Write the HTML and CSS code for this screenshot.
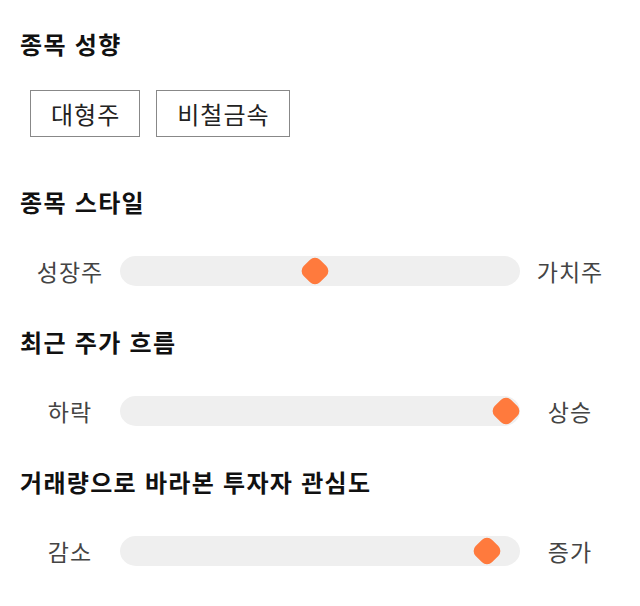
FILE: index.html
```html
<!DOCTYPE html>
<html lang="ko">
<head>
<meta charset="utf-8">
<link rel="stylesheet" href="styles.css">
</head>
<body>
<main class="page">
  <h2 class="title">종목 성향</h2>
  <div class="chips">
    <span class="chip">대형주</span>
    <span class="chip">비철금속</span>
  </div>

  <h2 class="title gap-lg">종목 스타일</h2>
  <div class="scale">
    <span class="label">성장주</span>
    <div class="track"><span class="thumb" style="--v:0.486"></span></div>
    <span class="label">가치주</span>
  </div>

  <h2 class="title">최근 주가 흐름</h2>
  <div class="scale">
    <span class="label">하락</span>
    <div class="track"><span class="thumb" style="--v:1"></span></div>
    <span class="label">상승</span>
  </div>

  <h2 class="title">거래량으로 바라본 투자자 관심도</h2>
  <div class="scale">
    <span class="label">감소</span>
    <div class="track"><span class="thumb" style="--v:0.949"></span></div>
    <span class="label">증가</span>
  </div>
</main>
</body>
</html>
```

FILE: styles.css
```css
html, body {
  margin: 0;
  padding: 0;
  background: #ffffff;
}

.page {
  padding: 29px 20px 0 20px;
  font-family: "Noto Sans CJK KR", "Noto Sans", sans-serif;
  color: #111;
}

.title {
  margin: 41px 0 0 0;
  font-size: 24px;
  font-weight: 700;
  letter-spacing: 1.3px;
  line-height: 30px;
  height: 30px;
  color: #111;
}

.title:first-child {
  margin-top: 0;
}

.title.gap-lg {
  margin-top: 50px;
}

.chips {
  display: flex;
  gap: 16px;
  margin-top: 31px;
  padding-left: 10px;
}

.chip {
  display: block;
  border: 1px solid #888;
  padding: 0 19px 0 20px;
  font-size: 24px;
  letter-spacing: 1px;
  line-height: 45px;
  height: 45px;
  color: #222;
}

.scale {
  display: grid;
  grid-template-columns: 100px 1fr 100px;
  align-items: center;
  margin-top: 39px;
  height: 30px;
}

.label {
  text-align: center;
  font-size: 23px;
  letter-spacing: 1px;
  line-height: 30px;
  color: #444;
}

.track {
  position: relative;
  height: 30px;
  background: #efefef;
  border-radius: 16px / 15px;
}

.thumb {
  position: absolute;
  top: 50%;
  left: calc(14px + var(--v) * (100% - 28px));
  width: 23px;
  height: 23px;
  background: #ff7a3d;
  border-radius: 7px;
  transform: translate(-50%, -50%) rotate(45deg);
}
```
